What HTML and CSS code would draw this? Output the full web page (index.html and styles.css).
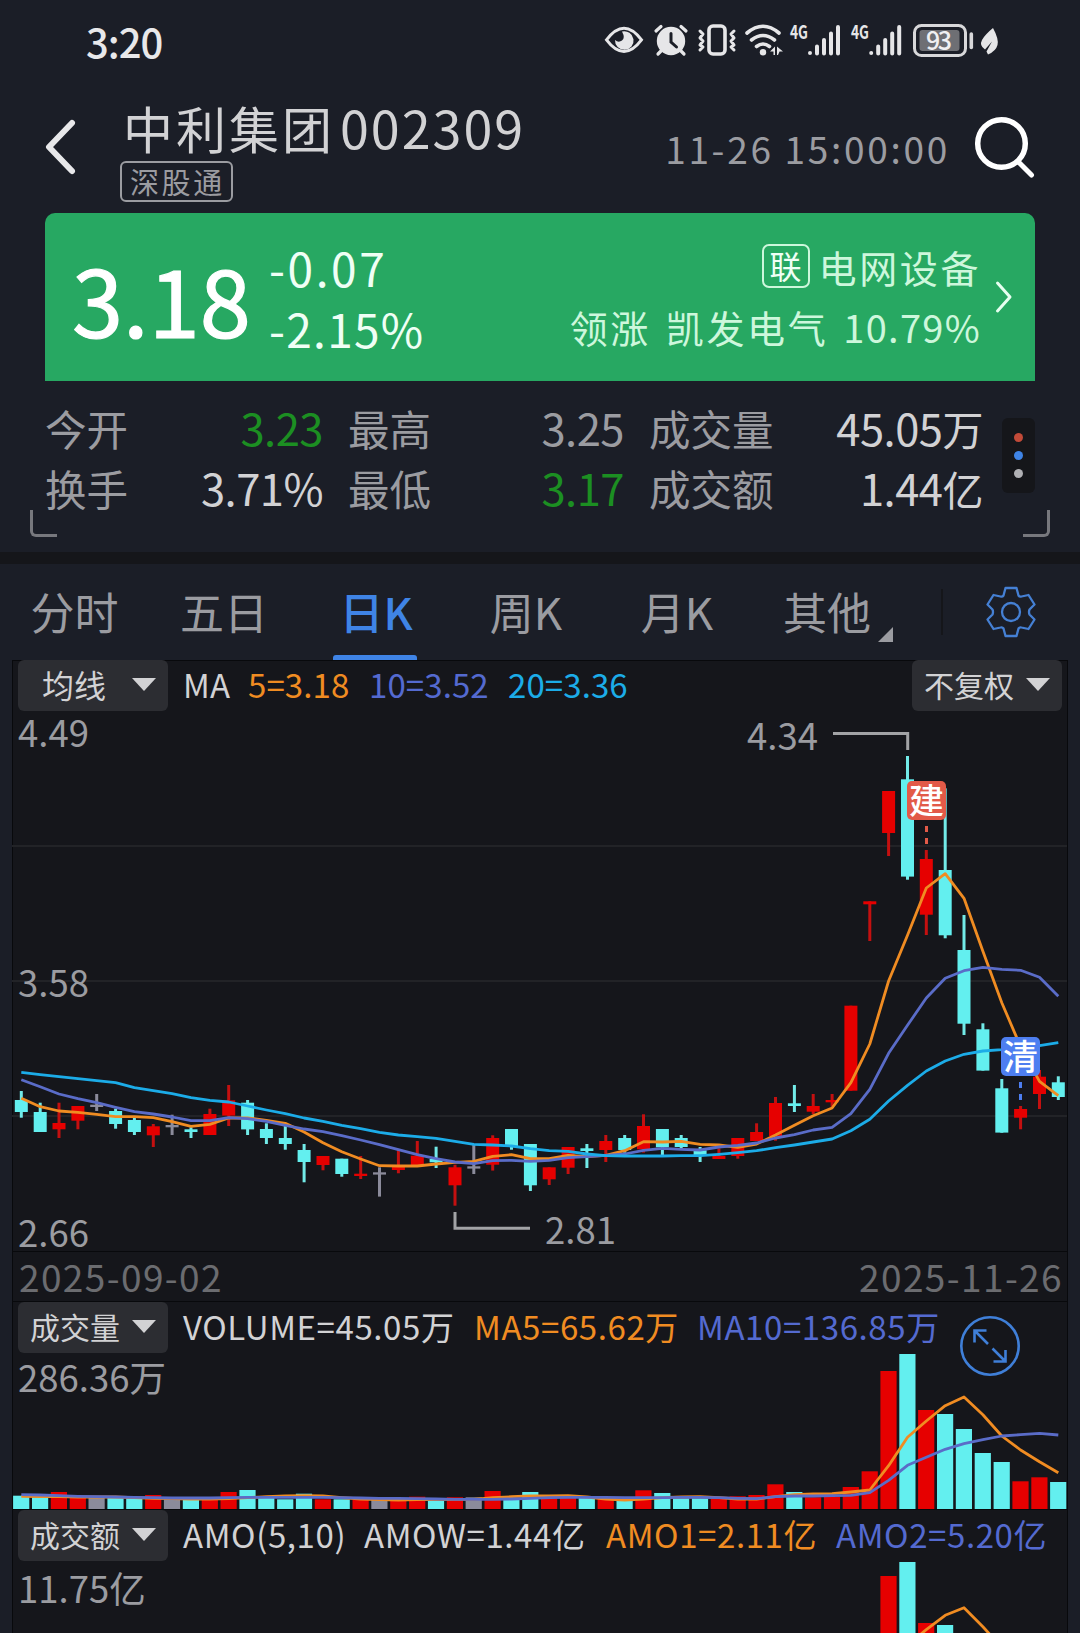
FILE: index.html
```html
<!DOCTYPE html>
<html lang="zh-CN">
<head>
    <meta charset="UTF-8">
    <meta name="viewport" content="width=device-width, initial-scale=1.0">
    <title>中利集团 002309</title>
    <link rel="stylesheet" href="styles.css">
</head>
<body>
    <div class="statusbar">
        <span class="clock">3:20</span>
        <svg class="status-icons" width="396" height="36" viewBox="604 22 396 36">
            <!-- Olho -->
            <path d="M606.500 39.800Q624 16.500 641.500 39.800Q624 63 606.500 39.800Z" fill="none" stroke="#e6e6e8" stroke-width="3"/>
            <path d="M622 31.500a9.300 9.300 0 1 1 -7 8.500q3.500 3 7 .5t0-9z" fill="#e6e6e8"/>
            <!-- Alarme -->
            <circle cx="671" cy="41" r="14.200" fill="#e6e6e8"/>
            <path d="M656 31l5-4.500M686 31l-5-4.500M661 51l-3 3M681 51l3 3" stroke="#e6e6e8" stroke-width="3.200" stroke-linecap="round"/>
            <path d="M671 33.500v8.500l5.500 5" fill="none" stroke="#1b1e27" stroke-width="3" stroke-linecap="round"/>
            <!-- Vibrar -->
            <rect x="709" y="26" width="16" height="28" rx="4" fill="none" stroke="#e6e6e8" stroke-width="3.600"/>
            <path d="M700 31l3 3-3 4 3 3-3 4 3 2-3 3M734 31l-3 3 3 4-3 3 3 4-3 2 3 3" fill="none" stroke="#e6e6e8" stroke-width="3" stroke-linecap="round" stroke-linejoin="round"/>
            <!-- Wi-Fi -->
            <path d="M747 33q16-13.500 32 0M751.500 40q11.500-9 23 0M756.500 46.500q6.500-5 13 0" fill="none" stroke="#e6e6e8" stroke-width="3.600" stroke-linecap="round"/>
            <circle cx="763" cy="52.300" r="3.200" fill="#e6e6e8"/>
            <path d="M770 51.500l5-5v8.500h-1.500v-3.500zM777 46.500l6 5h-3.500l-1.500 3.500h-1z" fill="#e6e6e8"/>
            <!-- Sinal -->
            <g id="signal" fill="none" stroke="#e6e6e8" stroke-width="4" stroke-linecap="round">
                <path d="M810 53v.1M817 46.500v7M824 40v13.500M831 33.500v20M838 27v26.500"/>
            </g>
            <use href="#signal" x="61.200"/>
            <text x="790" y="38.500" class="net" textLength="18" lengthAdjust="spacingAndGlyphs">4G</text>
            <text x="851" y="38.500" class="net" textLength="18" lengthAdjust="spacingAndGlyphs">4G</text>
            <!-- Bateria -->
            <rect x="914.500" y="25.500" width="51" height="30" rx="7" fill="none" stroke="#d8d8da" stroke-width="3"/>
            <rect x="919.500" y="30" width="40" height="21" rx="3" fill="#6e6f74"/>
            <path d="M971.300 34v13.500" stroke="#d8d8da" stroke-width="3.600" stroke-linecap="round"/>
            <text x="926" y="49.800" class="battery" textLength="26">93</text>
            <path d="M993 28q6 11 4.500 17t-9.500 9.500l-1.500-3 5.500-10-7 8q-6-4-3-9.500t11-12z" fill="#e6e6e8"/>
        </svg>
    </div>

    <div class="header">
        <svg class="back" width="36" height="60" viewBox="0 0 36 60"><path d="M29 6L6 30l23 24" fill="none" stroke="#e8e8ea" stroke-width="6" stroke-linecap="round" stroke-linejoin="round"/></svg>
        <div class="title">
            <h1>中利集团<span class="code">002309</span></h1>
            <span class="tag">深股通</span>
        </div>
        <span class="time">11-26 15:00:00</span>
        <svg class="search" width="62" height="62" viewBox="0 0 62 62"><circle cx="28.500" cy="28.500" r="23.800" fill="none" stroke="#fff" stroke-width="5.500"/><path d="M45 46.500L58.500 60" stroke="#fff" stroke-width="5" stroke-linecap="round"/></svg>
    </div>

    <div class="quote">
        <div class="price">3.18</div>
        <div class="change">
            <span class="diff">-0.07</span>
            <span>-2.15%</span>
        </div>
        <div class="sector">
            <div class="sector-name"><span class="link-tag">联</span>电网设备</div>
            <div class="sector-lead"><span>领涨</span><span>凯发电气</span><span class="lead-pct">10.79%</span></div>
        </div>
        <svg class="chevron" width="20" height="34" viewBox="0 0 20 34"><path d="M3.500 3L16 17 3.500 31" fill="none" stroke="#e6fff0" stroke-width="3" stroke-linecap="round" stroke-linejoin="round"/></svg>
    </div>

    <div class="stats">
        <div class="stats-grid">
            <span class="label">今开</span><span class="value down">3.23</span>
            <span class="label next">最高</span><span class="value flat">3.25</span>
            <span class="label next">成交量</span><span class="value">45.05<i>万</i></span>
            <span class="label">换手</span><span class="value">3.71%</span>
            <span class="label next">最低</span><span class="value down">3.17</span>
            <span class="label next">成交额</span><span class="value">1.44<i>亿</i></span>
        </div>
        <div class="dots"><b class="red"></b><b class="blue"></b><b class="gray"></b></div>
        <div class="corner corner-left"></div>
        <div class="corner corner-right"></div>
    </div>

    <div class="tabs">
        <span>分时</span>
        <span>五日</span>
        <span class="active">日K</span>
        <span>周K</span>
        <span>月K</span>
        <span class="more">其他</span>
        <div class="tab-settings">
            <svg width="52" height="52" viewBox="-26 -26 52 52">
                <path d="M-5.500-24H5.500L7.500-16.500Q8.500-15 10.500-15.500L17.500-17L23.500-7.500L18.500-2.500Q17.500 0 18.500 2.500L23.500 7.500L17.500 17L10.500 15.500Q8.500 15 7.500 16.500L5.500 24H-5.500L-7.500 16.500Q-8.500 15-10.500 15.500L-17.500 17L-23.500 7.500L-18.500 2.500Q-17.500 0-18.500-2.500L-23.500-7.500L-17.500-17L-10.500-15.500Q-8.500-15-7.500-16.500Z" fill="none" stroke="#4580d4" stroke-width="2.300" stroke-linejoin="round"/>
                <circle r="9" fill="none" stroke="#4580d4" stroke-width="2.300"/>
            </svg>
        </div>
    </div>

    <div class="chart">
        <div class="panel panel-price">
            <div class="indicator">
                <button class="select narrow">均线</button>
                <span class="ind i-ma">MA</span>
                <span class="ind i-ma5 ma5">5=3.18</span>
                <span class="ind i-ma10 ma10">10=3.52</span>
                <span class="ind i-ma20 ma20">20=3.36</span>
                <button class="select adjust">不复权</button>
            </div>
            <svg id="price" class="plot" width="1055" height="540" viewBox="12 711 1055 540"></svg>
        </div>
        <div class="dates"><span>2025-09-02</span><span>2025-11-26</span></div>
        <div class="panel panel-volume">
            <div class="indicator">
                <button class="select">成交量</button>
                <span class="ind i-vol">VOLUME=45.05万</span>
                <span class="ind i-vol5 ma5">MA5=65.62万</span>
                <span class="ind i-vol10 ma10">MA10=136.85万</span>
            </div>
            <svg id="volume" class="plot" width="1055" height="158" viewBox="12 1352 1055 158"></svg>
            <svg class="expand" width="62" height="62" viewBox="-31 -31 62 62">
                <circle r="28.700" fill="none" stroke="#3f7fd8" stroke-width="2.600"/>
                <path d="M-2-2L-15-15M-15.500-3.500V-15.500H-3.500M2.500 2.500L15 15M15.500 4V15.500H3.500" fill="none" stroke="#3f7fd8" stroke-width="2.600"/>
            </svg>
        </div>
        <div class="panel panel-amount">
            <div class="indicator">
                <button class="select">成交额</button>
                <span class="ind i-amo">AMO(5,10)</span>
                <span class="ind i-amow">AMOW=1.44亿</span>
                <span class="ind i-amo1 ma5">AMO1=2.11亿</span>
                <span class="ind i-amo2 ma10">AMO2=5.20亿</span>
            </div>
            <svg id="amount" class="plot" width="1055" height="72" viewBox="12 1561 1055 72"></svg>
        </div>
    </div>

    <script src="chart.js"></script>
</body>
</html>
```
FILE: styles.css
```css
:root {
    --bg: #1b1e27;
    --panel: #15161b;
    --line: #08090c;
    --text: #d2d2d4;
    --muted: #9b9ca1;
    --blue: #3f84e6;
    --ma5: #f08c22;
    --ma10: #546ad0;
    --ma20: #1cace8;
}

* {
    margin: 0;
    padding: 0;
    box-sizing: border-box;
}

body {
    width: 1080px;
    height: 1633px;
    overflow: hidden;
    background-color: var(--bg);
    color: var(--text);
    font-family: "Noto Sans CJK SC", "Noto Sans", sans-serif;
    white-space: nowrap;
}

svg {
    display: block;
    flex: none;
    overflow: visible;
}

/* Barra de status */
.statusbar {
    display: flex;
    justify-content: space-between;
    height: 86px;
    padding: 22px 80px 0 86px;
}

.clock {
    font-size: 40px;
    line-height: 39px;
    font-weight: 500;
    color: #e8e8ea;
    letter-spacing: -1px;
}

.net {
    font-size: 19px;
    font-weight: 700;
    fill: #e6e6e8;
}

.battery {
    font-size: 25px;
    font-weight: 500;
    fill: #f0f0f2;
}

/* Cabeçalho */
.header {
    display: flex;
    height: 127px;
    padding: 0 45px 0 43px;
}

.back {
    margin-top: 31px;
}

.title {
    margin-left: 41px;
    padding-top: 10px;
}

.title h1 {
    font-size: 50px;
    line-height: 62px;
    font-weight: 400;
    letter-spacing: 3px;
    padding-left: 3px;
}

.code {
    font-size: 52px;
    letter-spacing: 2px;
    margin-left: 5px;
}

.tag {
    display: block;
    width: 113px;
    height: 41px;
    margin-top: 3px;
    border: 2px solid var(--muted);
    border-radius: 6px;
    color: var(--muted);
    font-size: 29px;
    line-height: 37px;
    letter-spacing: 2.6px;
    padding-left: 8px;
}

.time {
    margin-left: auto;
    margin-right: 23px;
    padding-top: 35px;
    color: var(--muted);
    font-size: 37px;
    line-height: 54px;
    letter-spacing: 2.7px;
}

.search {
    margin-top: 29px;
}

/* Cotação */
.quote {
    display: flex;
    height: 168px;
    margin: 0 45px;
    padding: 0 21px 0 26px;
    background-color: #27a862;
    border-radius: 10px 10px 0 0;
    color: #fff;
}

.price {
    width: 198px;
    font-size: 92px;
    line-height: 170px;
    font-weight: 400;
    -webkit-text-stroke: 1.2px #fff;
    padding-left: 1px;
}

.change {
    display: flex;
    flex-direction: column;
    padding-top: 24px;
    font-size: 46px;
    line-height: 60.500px;
    letter-spacing: 1.3px;
    color: #effff5;
}

.diff {
    letter-spacing: 2.6px;
}

.sector {
    margin-left: auto;
    padding-top: 24px;
    font-size: 38px;
    line-height: 60px;
    letter-spacing: 2.6px;
    color: #cdf7dc;
}

.sector-name,
.sector-lead {
    display: flex;
    justify-content: flex-end;
    align-items: center;
}

.sector-lead {
    gap: 15px;
}

.lead-pct {
    letter-spacing: 1.3px;
}

.link-tag {
    width: 48px;
    height: 44px;
    margin: -2px 9px 0 0;
    border: 2px solid #cdf7dc;
    border-radius: 7px;
    font-size: 32px;
    line-height: 38px;
    letter-spacing: 0;
    text-align: center;
    color: #effff5;
}

.chevron {
    margin: 67px 0 0 13px;
}

/* Indicadores do dia */
.stats {
    position: relative;
    display: flex;
    height: 183px;
    padding: 17px 45px 0;
    border-bottom: 12px solid #15161a;
}

.stats-grid {
    display: grid;
    grid-template-columns: 100px 178px 125px 176px 155px 204px;
    grid-auto-rows: 60px;
    width: 938px;
}

.label {
    font-size: 41.500px;
    line-height: 60px;
    color: var(--muted);
}

.label.next {
    padding-left: 25px;
}

.value {
    font-size: 43.500px;
    line-height: 60px;
    text-align: right;
    letter-spacing: -0.5px;
}

.value i {
    font-style: normal;
    font-size: 41px;
}

.value.down {
    color: #1c8f22;
}

.value.flat {
    color: var(--muted);
}

.dots {
    display: flex;
    flex-direction: column;
    align-items: center;
    justify-content: center;
    gap: 9px;
    width: 33px;
    height: 75px;
    margin: 20px 0 0 19px;
    background-color: #15161a;
    border-radius: 6px;
}

.dots b {
    width: 9px;
    height: 9px;
    border-radius: 50%;
}

.dots .red { background-color: #c24a38; }
.dots .blue { background-color: #3f84e6; }
.dots .gray { background-color: #b0b0b4; }

.corner {
    position: absolute;
    top: 129px;
    width: 27px;
    height: 27px;
    border-bottom: 3px solid #77787d;
}

.corner-left {
    left: 30px;
    border-left: 3px solid #77787d;
    border-bottom-left-radius: 6px;
}

.corner-right {
    right: 30px;
    border-right: 3px solid #77787d;
    border-bottom-right-radius: 6px;
}

/* Abas */
.tabs {
    display: grid;
    grid-template-columns: 149px 150px 154px 146px 156px 186px 1fr;
    height: 96px;
    font-size: 44px;
    line-height: 95px;
    color: var(--muted);
}

.tabs span {
    text-align: center;
}

.tabs .active {
    position: relative;
    color: var(--blue);
    font-weight: 500;
}

.tabs .active::after {
    content: "";
    position: absolute;
    left: 34px;
    bottom: 0;
    width: 84px;
    height: 5px;
    background-color: var(--blue);
    border-radius: 3px 3px 0 0;
}

.tabs .more {
    display: flex;
    padding-left: 28px;
}

.tabs .more::after {
    content: "";
    width: 15px;
    height: 15px;
    margin: 63px 0 0 7px;
    background-color: var(--muted);
    clip-path: polygon(100% 0, 100% 100%, 0 100%);
}

.tab-settings {
    height: 46px;
    margin-top: 25px;
    padding-left: 42px;
    border-left: 2px solid #15161a;
}

.tab-settings svg {
    margin-top: -3px;
}

/* Gráficos */
.chart {
    width: 1056px;
    height: 973px;
    margin-left: 12px;
    background-color: var(--panel);
    border: 1px solid var(--line);
    border-bottom: 0;
}

.panel {
    position: relative;
    margin: -1px;
    border-top: 1px solid var(--line);
}

.panel-price {
    height: 592px;
    border-bottom: 1px solid var(--line);
}

.panel-volume {
    height: 209px;
}

.indicator {
    display: flex;
    align-items: flex-start;
    height: 50px;
    padding: 0 6px;
}

.panel-price .select {
    margin-top: -1px;
}

.select {
    flex: none;
    display: flex;
    align-items: center;
    justify-content: space-between;
    width: 150px;
    height: 51px;
    padding: 0 12px;
    border: 0;
    border-radius: 6px;
    background-color: #2c2d32;
    color: var(--text);
    font-family: inherit;
    font-size: 30px;
    line-height: 45px;
    padding-bottom: 2px;
}

.select.narrow {
    padding-left: 24px;
    font-size: 32px;
}

.select::after {
    content: "";
    width: 24px;
    height: 13px;
    background-color: var(--text);
    clip-path: polygon(0 0, 100% 0, 50% 100%);
}

.select.adjust {
    margin-left: auto;
}

.ind {
    flex: none;
    font-size: 33px;
    line-height: 49px;
    letter-spacing: 0.6px;
}

.panel-price .ind {
    line-height: 47px;
    letter-spacing: 0.1px;
}

.i-ma { margin-left: 15px; width: 65px; }
.i-ma5 { width: 121px; }
.i-ma10 { width: 139px; }
.i-vol { margin-left: 15px; width: 291px; }
.i-vol5 { width: 223px; }
.i-amo { margin-left: 15px; width: 181px; }
.i-amow { width: 242px; }
.i-amo1 { width: 230px; }

.ma5 { color: var(--ma5); }
.ma10 { color: var(--ma10); }
.ma20 { color: var(--ma20); }

.dates {
    display: flex;
    justify-content: space-between;
    height: 51px;
    padding: 0 4px 0 6px;
    color: #6b6c70;
    font-size: 37px;
    line-height: 51px;
    letter-spacing: 1.4px;
}

.expand {
    position: absolute;
    left: 947px;
    top: 13px;
}

.axis {
    font-size: 36.500px;
    fill: var(--muted);
}

.grid {
    stroke: #222327;
    stroke-width: 2;
}

.leader {
    fill: none;
    stroke: #a2a3a6;
    stroke-width: 3;
}

.up { fill: #e60000; }
.up-wick { fill: #c41010; }
.drop { fill: #63efef; }
.drop-wick { fill: #72eae8; }
.even, .even-wick { fill: #8b8b9b; }

.series {
    fill: none;
    stroke-width: 2.800;
    stroke-linejoin: round;
}

.s5 { stroke: var(--ma5); }
.s10 { stroke: #5a6cc8; }
.s20 { stroke: var(--ma20); }

.mark {
    font-size: 35px;
    font-weight: 500;
    fill: #fff;
}
```
FILE: chart.js
```javascript
// u = alta, d = baixa, e = estável; valores em terços de pixel: [máx, topo, base, mín]
const BASE_Y = 1040;
const FIRST_X = 21.3;
const STEP = 18.855;

const candles = [
    ['d', 153, 180, 216, 233], ['d', 188, 216, 276, 276], ['u', 188, 249, 268, 294], ['u', 198, 198, 242, 268],
    ['e', 162, 194, 201, 213], ['d', 206, 213, 252, 266], ['d', 233, 240, 276, 285], ['u', 252, 259, 286, 321],
    ['e', 224, 255, 262, 285], ['d', 262, 268, 276, 294], ['u', 206, 222, 285, 285], ['u', 135, 181, 227, 258],
    ['d', 180, 188, 268, 285], ['d', 250, 267, 294, 312], ['d', 258, 294, 312, 329], ['d', 312, 330, 366, 427],
    ['u', 348, 348, 375, 391], ['d', 356, 356, 402, 410], ['u', 348, 401, 408, 417], ['e', 382, 397, 404, 470],
    ['u', 330, 378, 390, 400], ['u', 303, 347, 378, 378], ['d', 320, 357, 367, 384], ['u', 374, 382, 436, 497],
    ['e', 312, 379, 386, 402], ['u', 286, 294, 374, 392], ['d', 267, 267, 318, 329], ['d', 312, 312, 436, 453],
    ['u', 382, 382, 418, 435], ['u', 321, 321, 383, 402], ['d', 312, 325, 333, 384], ['u', 285, 303, 330, 366],
    ['d', 285, 294, 330, 338], ['u', 223, 258, 328, 338], ['d', 267, 267, 322, 346], ['d', 285, 294, 321, 330],
    ['d', 321, 331, 347, 366], ['u', 325, 348, 357, 357], ['u', 294, 294, 348, 356], ['u', 250, 276, 303, 303],
    ['u', 171, 189, 288, 302], ['d', 135, 190, 198, 216], ['u', 162, 198, 215, 222], ['u', 162, 180, 187, 200],
    ['u', -103, -103, 152, 152], ['u', -416, -416, -407, -297], ['u', -747, -747, -621, -552], ['d', -852, -782, -490, -481],
    ['u', -570, -543, -376, -315], ['d', -755, -510, -314, -305], ['d', -375, -270, -49, -15], ['d', -50, -32, 92, 92],
    ['d', 117, 145, 278, 278], ['u', 198, 207, 233, 268], ['u', 90, 110, 162, 207], ['d', 109, 127, 171, 180]
];

const ma5 = [175, 200, 213, 217, 223, 230, 230, 233, 245, 259, 253, 234, 234, 241, 250, 276, 308, 335, 357, 377,
    378, 378, 372, 367, 364, 349, 344, 356, 356, 346, 350, 346, 332, 305, 306, 304, 313, 315, 322, 312,
    285, 256, 227, 204, 128, 12, -177, -314, -456, -499, -425, -266, -112, 20, 124, 167];
const ma10 = [119, 140, 162, 176, 188, 202, 215, 222, 231, 242, 242, 233, 236, 244, 256, 267, 275, 287, 300, 314,
    329, 344, 356, 366, 371, 362, 361, 364, 361, 353, 350, 346, 342, 331, 325, 328, 330, 321, 316, 309,
    294, 284, 270, 262, 221, 148, 40, -44, -126, -185, -208, -218, -212, -209, -188, -131];
const ma20 = [97, 104, 110, 116, 122, 128, 143, 152, 161, 173, 181, 186, 198, 210, 221, 234, 244, 256, 266, 277,
    285, 290, 295, 304, 313, 315, 318, 326, 332, 334, 342, 347, 348, 348, 348, 347, 347, 343, 338, 332,
    323, 315, 306, 297, 272, 238, 183, 136, 93, 63, 43, 33, 29, 22, 17, 8];

const volumes = [40, 35, 51, 37, 35, 35, 32, 42, 35, 27, 29, 51, 57, 37, 29, 46, 29, 29, 27, 29,
    25, 37, 25, 35, 35, 54, 32, 51, 32, 35, 35, 32, 29, 56, 48, 32, 32, 30, 38, 42,
    74, 51, 35, 37, 66, 113, 414, 465, 297, 285, 240, 168, 141, 83, 95, 81];
const vol5 = [38, 37, 37, 36, 36, 36, 34, 32, 31, 30, 30, 31, 34, 37, 39, 40, 39, 34, 30, 28,
    27, 28, 28, 29, 29, 34, 37, 39, 39, 40, 36, 30, 27, 30, 34, 36, 37, 34, 30, 30,
    37, 43, 45, 46, 51, 57, 130, 215, 264, 310, 336, 283, 219, 177, 142, 109];
const vol10 = [43, 42, 40, 38, 37, 36, 35, 34, 33, 33, 33, 34, 35, 35, 35, 35, 35, 34, 33, 32,
    32, 31, 30, 29, 29, 29, 30, 32, 34, 35, 35, 35, 34, 34, 34, 35, 35, 34, 32, 31,
    37, 39, 39, 40, 41, 49, 86, 131, 155, 179, 196, 208, 219, 223, 227, 222];

const amounts = volumes.slice(0, 46).concat([423, 465, 282, 276, 222, 150, 124, 74, 84, 72]);
const amo5 = vol5.slice(0, 46).concat([132, 216, 262, 305, 328, 271, 208, 165, 131, 100]);

const names = { u: 'up', d: 'drop', e: 'even' };
const xAt = i => FIRST_X + i * STEP;
const yAt = v => BASE_Y + v / 3;

function rect(x, y, w, h, cls) {
    return `<rect x="${x.toFixed(1)}" y="${y.toFixed(1)}" width="${w}" height="${h.toFixed(1)}" class="${cls}"/>`;
}

function line(values, toY, cls) {
    const points = values.map((v, i) => `${xAt(i).toFixed(1)},${toY(v).toFixed(1)}`).join(' ');
    return `<polyline points="${points}" class="series ${cls}"/>`;
}

function marker(x, y, color, text, dashEnd) {
    return `<path d="M${x} ${y + 45}V${dashEnd}" stroke="${color}" stroke-width="3" stroke-dasharray="6 6"/>
        <rect x="${x - 19.5}" y="${y}" width="39" height="39" rx="5" fill="${color}"/>
        <text x="${x}" y="${y + 33}" class="mark" text-anchor="middle">${text}</text>`;
}

function drawPrice() {
    let out = [846, 981, 1116].map(y => `<path d="M12 ${y}H1067" class="grid"/>`).join('');
    candles.forEach(([kind, high, top, bottom, low], i) => {
        out += rect(xAt(i) - 1.5, yAt(high), 3, (low - high) / 3, names[kind] + '-wick');
        out += rect(xAt(i) - 6.5, yAt(top), 13, (bottom - top) / 3, names[kind]);
    });
    out += line(ma5, yAt, 's5') + line(ma10, yAt, 's10') + line(ma20, yAt, 's20');
    out += '<path d="M833 733.500H907.700V750" class="leader"/><path d="M455 1212V1228.300H530" class="leader"/>';
    out += marker(926.5, 781, '#e25a48', '建', 845) + marker(1020.5, 1037, '#4d7ef0', '清', 1100);
    out += `<text x="18" y="747" class="axis">4.49</text>
        <text x="18" y="997" class="axis">3.58</text>
        <text x="18" y="1247" class="axis">2.66</text>
        <text x="747" y="750" class="axis">4.34</text>
        <text x="545" y="1244" class="axis">2.81</text>`;
    document.getElementById('price').innerHTML = out;
}

function drawBars(id, base, values, average, label, labelY) {
    const toY = v => base - v / 3;
    let out = `<text x="18" y="${labelY}" class="axis">${label}</text>`;
    values.forEach((v, i) => {
        out += rect(xAt(i) - 8.2, toY(v), 16.2, v / 3, names[candles[i][0]]);
    });
    out += line(average, toY, 's5') + line(vol10, toY, 's10');
    document.getElementById(id).innerHTML = out;
}

drawPrice();
drawBars('volume', 1509, volumes, vol5, '286.36万', 1392);
drawBars('amount', 1718, amounts, amo5, '11.75亿', 1604);
```
